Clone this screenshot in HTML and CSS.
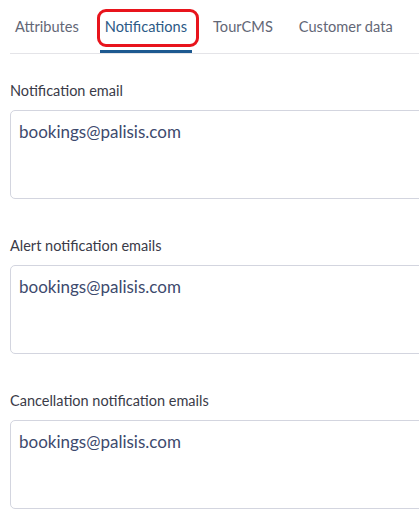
FILE: index.html
```html
<!DOCTYPE html>
<html>
<head>
<meta charset="utf-8">
<link rel="stylesheet" href="styles.css">
</head>
<body>
<div class="page">
  <nav class="tabs">
    <div class="tab">Attributes</div>
    <div class="tab active">Notifications<span class="annot"></span></div>
    <div class="tab">TourCMS</div>
    <div class="tab">Customer data</div>
  </nav>
  <div class="form">
    <div class="field">
      <div class="label">Notification email</div>
      <div class="box">bookings@palisis.com</div>
    </div>
    <div class="field">
      <div class="label">Alert notification emails</div>
      <div class="box">bookings@palisis.com</div>
    </div>
    <div class="field">
      <div class="label">Cancellation notification emails</div>
      <div class="box">bookings@palisis.com</div>
    </div>
  </div>
</div>
</body>
</html>
```
FILE: styles.css
```css
html, body {
  margin: 0;
  padding: 0;
  background: #ffffff;
  font-family: Lato, "Open Sans", sans-serif;
  overflow: hidden;
}
.page {
  width: 419px;
  height: 523px;
  overflow: hidden;
}
.tabs {
  display: flex;
  gap: 16px;
  margin-left: 10px;
  border-bottom: 1px solid #e4e4e8;
  height: 53px;
  width: 460px;
}
.tab {
  position: relative;
  padding: 17px 5px 0;
  height: 33px;
  font-size: 14.6px;
  line-height: 20px;
  color: #636776;
  border-bottom: 3px solid transparent;
  white-space: nowrap;
}
.tab.active {
  color: #2c5a86;
  border-bottom-color: #1d5990;
}
.annot {
  position: absolute;
  left: -3px;
  right: -7px;
  top: 9px;
  height: 32px;
  border: 3px solid #e8141c;
  border-radius: 9px;
}
.form {
  padding: 0 0 0 10px;
}
.field {
  padding-top: 27px;
}
.field + .field {
  padding-top: 37px;
}
.label {
  font-size: 14.5px;
  line-height: 20px;
  color: #3a3b48;
  margin-bottom: 9px;
}
.box {
  width: 430px;
  border: 1px solid #d3d5df;
  border-radius: 5px;
  padding: 10px 8px 0;
  box-sizing: content-box;
  font-size: 17px;
  line-height: 22px;
  height: 77px;
  color: #3d4a6d;
}
```
